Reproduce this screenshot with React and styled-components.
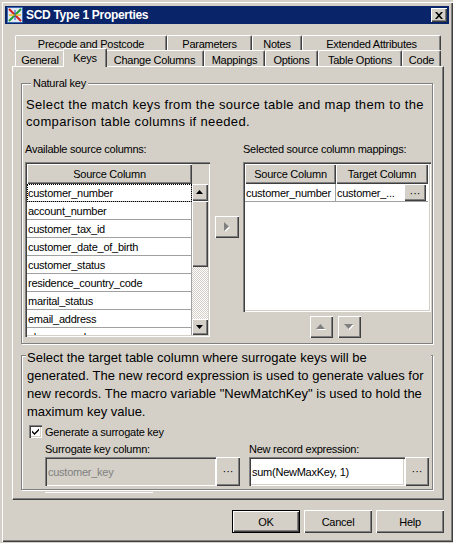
import React from 'react';
import styled, { createGlobalStyle } from 'styled-components';

const GlobalStyle = createGlobalStyle`
  html, body { margin: 0; padding: 0; background: #d4d0c8; }
  body { font-family: "Liberation Sans", Arial, sans-serif; color: #000; }
  * { box-sizing: border-box; }
`;

const raised = `
  background: #d4d0c8;
  box-shadow: inset 1px 1px 0 #fff, inset -1px -1px 0 #404040, inset -2px -2px 0 #808080;
`;
const sunken = `
  box-shadow: inset 1px 1px 0 #808080, inset 2px 2px 0 #404040, inset -1px -1px 0 #fff, inset -2px -2px 0 #d4d0c8;
`;

const Window = styled.div`
  margin: 1px 0 0 1px;
  width: 452px;
  height: 541px;
  padding: 5px 4px 4px 4px;
  display: flex;
  flex-direction: column;
  background: #d4d0c8;
  box-shadow: inset 1px 1px 0 #d4d0c8, inset 2px 2px 0 #fff, inset -1px -1px 0 #404040, inset -2px -2px 0 #808080;
`;

const TitleBar = styled.div`
  height: 18px;
  flex: none;
  background: #0a246a;
  display: flex;
  align-items: center;
  padding: 0 2px;
  color: #fff;
  font-weight: bold;
  font-size: 12px;
  letter-spacing: -0.3px;
`;

const TitleText = styled.span`
  margin-left: 3px;
  white-space: nowrap;
`;

const CloseBtn = styled.div`
  margin-left: auto;
  width: 16px;
  height: 14px;
  display: flex;
  align-items: center;
  justify-content: center;
  ${raised}
`;

const Body = styled.div`
  flex: 1;
  padding: 11px 5px 0 7px;
  display: flex;
  flex-direction: column;
`;

const TabRow = styled.div`
  display: flex;
  height: ${p => p.$h}px;
  padding-left: 3px;
  flex: none;
`;

const Tab = styled.div`
  width: ${p => (p.$active ? p.$w + 4 : p.$w)}px;
  height: ${p => (p.$active ? 'calc(100% + 3px)' : '100%')};
  margin: ${p => (p.$active ? '-2px -2px -1px' : '0')};
  position: relative;
  z-index: ${p => (p.$active ? 2 : 1)};
  flex: none;
  display: flex;
  align-items: center;
  justify-content: center;
  font-size: 11px;
  letter-spacing: -0.25px;
  white-space: nowrap;
  background: #d4d0c8;
  border-top: 1px solid #fff;
  border-left: 1px solid #fff;
  border-right: 1px solid #404040;
  border-radius: 2px 2px 0 0;
  box-shadow: inset -1px 0 0 #808080;
  padding-top: ${p => (p.$active ? 0 : 2)}px;
`;

const Panel = styled.div`
  height: 434px;
  flex: none;
  border: 1px solid;
  border-color: #fff #404040 #404040 #fff;
  box-shadow: inset -1px -1px 0 #808080;
  padding: 16px 10px 0 8px;
  display: flex;
  flex-direction: column;
`;

const Group = styled.div`
  position: relative;
  height: ${p => p.$h}px;
  margin-top: ${p => p.$mt || 0}px;
  flex: none;
  border: 1px solid #808080;
  box-shadow: inset 1px 1px 0 #fff, 1px 1px 0 #fff;
  padding: ${p => p.$pad};
`;

const Legend = styled.span`
  position: absolute;
  top: -7px;
  left: 9px;
  padding: 0 2px;
  background: #d4d0c8;
  font-size: 11px;
  letter-spacing: -0.25px;
  line-height: 13px;
`;

const Prose = styled.div`
  font-size: 13px;
  line-height: ${p => p.$lh}px;
  letter-spacing: ${p => p.$ls || 0}px;
  white-space: nowrap;
  padding-left: 1px;
  margin-top: ${p => p.$mt || 0}px;
  position: relative;
  background: #d4d0c8;
`;

const ColumnsRow = styled.div`
  display: flex;
  align-items: flex-start;
  margin-top: 13px;
`;

const Col = styled.div`
  width: ${p => p.$w}px;
  flex: none;
  display: flex;
  flex-direction: column;
`;

const SmallLabel = styled.div`
  font-size: 11px;
  letter-spacing: -0.25px;
  line-height: 13px;
  white-space: nowrap;
`;

const Frame = styled.div`
  margin-top: 6px;
  height: ${p => p.$h}px;
  padding: 2px;
  display: flex;
  background: ${p => p.$bg};
  ${sunken}
`;

const CellsCol = styled.div`
  width: ${p => p.$w}px;
  flex: none;
  display: flex;
  flex-direction: column;
  overflow: hidden;
  background: #fff;
`;

const HeaderRow = styled.div`
  display: flex;
  height: 20px;
  flex: none;
`;

const HeaderCell = styled.div`
  width: ${p => p.$w}px;
  flex: none;
  display: flex;
  align-items: center;
  justify-content: center;
  font-size: 11px;
  letter-spacing: -0.25px;
  white-space: nowrap;
  ${raised}
`;

const ListRow = styled.div`
  height: 18px;
  flex: none;
  display: flex;
  align-items: center;
  border-bottom: 1px solid #a0a0a0;
  border-right: 1px solid #a0a0a0;
  font-size: 11px;
  letter-spacing: -0.25px;
  white-space: nowrap;
  padding-left: 1px;
  outline: ${p => (p.$focus ? '1px dotted #000' : 'none')};
  outline-offset: -1px;
`;

const ScrollCol = styled.div`
  width: 16px;
  flex: none;
  display: flex;
  flex-direction: column;
  background: #d4d0c8;
`;

const ScrollPart = styled.div`
  height: ${p => p.$h}px;
  flex: ${p => (p.$grow ? 1 : 'none')};
  display: flex;
  align-items: center;
  justify-content: center;
  ${p => (p.$track
    ? 'background: repeating-conic-gradient(#d4d0c8 0 25%, #ffffff 0 50%) 0 0 / 2px 2px;'
    : raised)}
`;

const Spacer = styled.div`
  height: 20px;
  flex: none;
`;

const MidCol = styled.div`
  width: 24px;
  flex: none;
  margin: 73px 4px 0 5px;
`;

const IconButton = styled.div`
  width: ${p => p.$w}px;
  height: ${p => p.$h}px;
  flex: none;
  display: flex;
  align-items: center;
  justify-content: center;
  font-size: 11px;
  line-height: 1;
  ${raised}
`;

const MapRows = styled.div`
  display: flex;
  flex-direction: column;
  width: 184px;
`;

const MapRow = styled.div`
  display: flex;
  height: 18px;
  width: 183px;
  border-bottom: 1px solid #a0a0a0;
`;

const MapCell = styled.div`
  width: ${p => p.$w}px;
  flex: none;
  display: flex;
  align-items: center;
  font-size: 11px;
  letter-spacing: -0.25px;
  white-space: nowrap;
  padding-left: 1px;
  border-right: ${p => (p.$divider ? '1px solid #a0a0a0' : 'none')};
  overflow: hidden;
`;

const CellBtn = styled.div`
  margin-left: auto;
  margin-right: 2px;
  width: 22px;
  height: 17px;
  flex: none;
  display: flex;
  align-items: center;
  justify-content: center;
  font-size: 11px;
  letter-spacing: 0;
  ${raised}
`;

const MoveRow = styled.div`
  display: flex;
  justify-content: center;
  gap: 5px;
  margin-top: 4px;
  padding-right: 4px;
`;

const CheckRow = styled.div`
  display: flex;
  align-items: center;
  height: 15px;
  margin-top: 3px;
  padding-left: 3px;
  font-size: 11px;
  letter-spacing: -0.25px;
`;

const CheckBox = styled.div`
  width: 13px;
  height: 13px;
  flex: none;
  margin-right: 3px;
  background: #fff;
  display: flex;
  align-items: center;
  justify-content: center;
  ${sunken}
`;

const FieldGrid = styled.div`
  display: grid;
  grid-template-columns: 195px 180px;
  column-gap: 9px;
  row-gap: 1px;
  margin: 4px 0 0 19px;
`;

const FieldBox = styled.div`
  display: flex;
  height: 29px;
`;

const Input = styled.div`
  flex: 1;
  display: flex;
  align-items: center;
  padding: 0 3px;
  font-size: 11px;
  letter-spacing: -0.25px;
  white-space: nowrap;
  background: ${p => (p.$disabled ? '#d4d0c8' : '#fff')};
  color: ${p => (p.$disabled ? '#808080' : '#000')};
  ${sunken}
`;

const Stub = styled.div`
  width: 108px;
  height: 1px;
  margin: 2px 0 0 24px;
  background: #fff;
`;

const ButtonRow = styled.div`
  display: flex;
  justify-content: flex-end;
  gap: 4px;
  margin-top: 10px;
`;

const DlgButton = styled.div`
  width: 68px;
  height: 23px;
  display: flex;
  align-items: center;
  justify-content: center;
  font-size: 11px;
  letter-spacing: -0.25px;
  background: #d4d0c8;
  box-shadow: ${p => (p.$default
    ? 'inset 0 0 0 1px #000, inset 2px 2px 0 #fff, inset -2px -2px 0 #404040, inset -3px -3px 0 #808080'
    : 'inset 1px 1px 0 #fff, inset -1px -1px 0 #404040, inset -2px -2px 0 #808080')};
`;

const AppIcon = () => (
  <svg width="16" height="16" viewBox="0 0 16 16">
    <rect x="0.5" y="0.5" width="15" height="15" fill="#dfe8f4" stroke="#3b6bb5" />
    <line x1="2" y1="2" x2="14" y2="14" stroke="#d02020" strokeWidth="2" />
    <line x1="14" y1="2" x2="2" y2="14" stroke="#20a030" strokeWidth="2" />
    <line x1="2" y1="8" x2="14" y2="8" stroke="#e8c020" strokeWidth="1.5" />
    <line x1="8" y1="3" x2="8" y2="13" stroke="#2050c0" strokeWidth="1" />
  </svg>
);

const CloseGlyph = () => (
  <svg width="8" height="7" viewBox="0 0 8 7">
    <path d="M0 0h2l2 2.2L6 0h2L5 3.5 8 7H6L4 4.8 2 7H0l3-3.5z" fill="#000" />
  </svg>
);

const Tri = ({ dir, color, shadow, w = 7, h = 4 }) => {
  const pts = {
    up: `0,${h} ${w / 2},0 ${w},${h}`,
    down: `0,0 ${w},0 ${w / 2},${h}`,
    right: `0,0 ${w},${h / 2} 0,${h}`,
  }[dir];
  return (
    <svg width={w + 1} height={h + 1} viewBox={`0 0 ${w + 1} ${h + 1}`}>
      {shadow && <polygon points={pts} fill={shadow} transform="translate(1,1)" />}
      <polygon points={pts} fill={color} />
    </svg>
  );
};

const Check = () => (
  <svg width="7" height="7" viewBox="0 0 7 7">
    <path d="M0 2.5l2.5 2.5L7 0.5V2.5L2.5 7L0 4.5z" fill="#000" />
  </svg>
);

const row1 = [['Precode and Postcode', 152], ['Parameters', 85], ['Notes', 50], ['Extended Attributes', 139]];
const row2 = [['General', 50], ['Keys', 40, true], ['Change Columns', 99], ['Mappings', 61], ['Options', 53], ['Table Options', 84], ['Code', 39]];
const columns = [
  'customer_number', 'account_number', 'customer_tax_id', 'customer_date_of_birth',
  'customer_status', 'residence_country_code', 'marital_status', 'email_address', 'phone_number',
];

export default function App() {
  return (
    <>
      <GlobalStyle />
      <Window>
        <TitleBar>
          <AppIcon />
          <TitleText>SCD Type 1 Properties</TitleText>
          <CloseBtn><CloseGlyph /></CloseBtn>
        </TitleBar>
        <Body>
          <TabRow $h={15}>
            {row1.map(([t, w]) => <Tab key={t} $w={w}>{t}</Tab>)}
          </TabRow>
          <TabRow $h={16}>
            {row2.map(([t, w, a]) => <Tab key={t} $w={w} $active={a}>{t}</Tab>)}
          </TabRow>
          <Panel>
            <Group $h={261} $pad="12px 1px 0 3px">
              <Legend>Natural key</Legend>
              <Prose $lh={17} $ls={0.35}>
                Select the match keys from the source table and map them to the<br />
                comparison table columns if needed.
              </Prose>
              <ColumnsRow>
                <Col $w={185}>
                  <SmallLabel>Available source columns:</SmallLabel>
                  <Frame $h={175} $bg="#d4d0c8">
                    <CellsCol $w={165}>
                      <HeaderRow><HeaderCell $w={165}>Source Column</HeaderCell></HeaderRow>
                      {columns.map((c, i) => <ListRow key={c} $focus={i === 0}>{c}</ListRow>)}
                    </CellsCol>
                    <ScrollCol>
                      <Spacer />
                      <ScrollPart $h={17}><Tri dir="up" color="#000" /></ScrollPart>
                      <ScrollPart $h={66} />
                      <ScrollPart $grow $track />
                      <ScrollPart $h={16}><Tri dir="down" color="#000" /></ScrollPart>
                    </ScrollCol>
                  </Frame>
                </Col>
                <MidCol>
                  <IconButton $w={24} $h={22}><Tri dir="right" color="#808080" shadow="#fff" w={5} h={9} /></IconButton>
                </MidCol>
                <Col $w={188}>
                  <SmallLabel>Selected source column mappings:</SmallLabel>
                  <Frame $h={150} $bg="#fff">
                    <MapRows>
                      <HeaderRow>
                        <HeaderCell $w={91}>Source Column</HeaderCell>
                        <HeaderCell $w={92}>Target Column</HeaderCell>
                      </HeaderRow>
                      <MapRow>
                        <MapCell $w={91} $divider>customer_number</MapCell>
                        <MapCell $w={92}>customer_...<CellBtn>···</CellBtn></MapCell>
                      </MapRow>
                    </MapRows>
                  </Frame>
                  <MoveRow>
                    <IconButton $w={23} $h={22}><Tri dir="up" color="#808080" shadow="#fff" w={9} h={5} /></IconButton>
                    <IconButton $w={23} $h={22}><Tri dir="down" color="#808080" shadow="#fff" w={9} h={5} /></IconButton>
                  </MoveRow>
                </Col>
              </ColumnsRow>
            </Group>
            <Group $h={135} $mt={11} $pad="0 1px 0 4px">
              <Prose $lh={18} $mt={-7}>
                Select the target table column where surrogate keys will be<br />
                generated. The new record expression is used to generate values for<br />
                new records. The macro variable "NewMatchKey" is used to hold the<br />
                maximum key value.
              </Prose>
              <CheckRow>
                <CheckBox><Check /></CheckBox>
                Generate a surrogate key
              </CheckRow>
              <FieldGrid>
                <SmallLabel>Surrogate key column:</SmallLabel>
                <SmallLabel>New record expression:</SmallLabel>
                <FieldBox>
                  <Input $disabled>customer_key</Input>
                  <IconButton $w={24} $h={29}>···</IconButton>
                </FieldBox>
                <FieldBox>
                  <Input>sum(NewMaxKey, 1)</Input>
                  <IconButton $w={24} $h={29}>···</IconButton>
                </FieldBox>
              </FieldGrid>
            </Group>
            <Stub />
          </Panel>
          <ButtonRow>
            <DlgButton $default>OK</DlgButton>
            <DlgButton>Cancel</DlgButton>
            <DlgButton>Help</DlgButton>
          </ButtonRow>
        </Body>
      </Window>
    </>
  );
}
